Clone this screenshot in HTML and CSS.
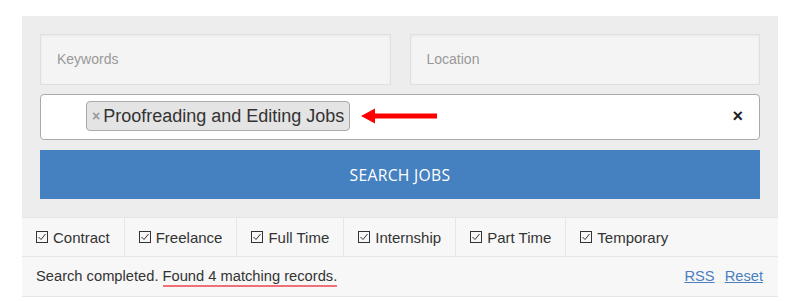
FILE: index.html
```html
<!DOCTYPE html>
<html>
<head>
<meta charset="utf-8">
<link rel="stylesheet" href="styles.css">
</head>
<body>
<div class="wrap">
  <div class="panel">
    <div class="inputs">
      <div class="field">Keywords</div>
      <div class="field">Location</div>
    </div>
    <div class="tagbox">
      <span class="tag"><span class="tag-x">×</span>Proofreading and Editing Jobs</span>
      <svg class="arrow" width="76" height="16" viewBox="0 0 76 16"><polygon points="0,8 14,0.5 14,5.5 76,5.5 76,10.5 14,10.5 14,15.5" fill="#f00"/></svg>
      <span class="clear">×</span>
    </div>
    <div class="button">SEARCH JOBS</div>
  </div>
  <div class="filters">
    <div class="cell"><svg class="cb" width="12" height="12" viewBox="0 0 12 12"><rect x="0.5" y="0.5" width="11" height="11" fill="none" stroke="#333"/><polyline points="2.5,6 5,8.5 9.5,3" fill="none" stroke="#333" stroke-width="1"/></svg>Contract</div>
    <div class="cell"><svg class="cb" width="12" height="12" viewBox="0 0 12 12"><rect x="0.5" y="0.5" width="11" height="11" fill="none" stroke="#333"/><polyline points="2.5,6 5,8.5 9.5,3" fill="none" stroke="#333" stroke-width="1"/></svg>Freelance</div>
    <div class="cell"><svg class="cb" width="12" height="12" viewBox="0 0 12 12"><rect x="0.5" y="0.5" width="11" height="11" fill="none" stroke="#333"/><polyline points="2.5,6 5,8.5 9.5,3" fill="none" stroke="#333" stroke-width="1"/></svg>Full Time</div>
    <div class="cell"><svg class="cb" width="12" height="12" viewBox="0 0 12 12"><rect x="0.5" y="0.5" width="11" height="11" fill="none" stroke="#333"/><polyline points="2.5,6 5,8.5 9.5,3" fill="none" stroke="#333" stroke-width="1"/></svg>Internship</div>
    <div class="cell"><svg class="cb" width="12" height="12" viewBox="0 0 12 12"><rect x="0.5" y="0.5" width="11" height="11" fill="none" stroke="#333"/><polyline points="2.5,6 5,8.5 9.5,3" fill="none" stroke="#333" stroke-width="1"/></svg>Part Time</div>
    <div class="cell last"><svg class="cb" width="12" height="12" viewBox="0 0 12 12"><rect x="0.5" y="0.5" width="11" height="11" fill="none" stroke="#333"/><polyline points="2.5,6 5,8.5 9.5,3" fill="none" stroke="#333" stroke-width="1"/></svg>Temporary</div>
  </div>
  <div class="results">
    <div class="msg">Search completed. <span class="found">Found 4 matching records.</span></div>
    <div class="links"><a href="#">RSS</a><a href="#">Reset</a></div>
  </div>
</div>
</body>
</html>
```
FILE: styles.css
```css
* { box-sizing: border-box; }
body {
  margin: 0;
  background: #fff;
  font-family: "Liberation Sans", Arial, sans-serif;
  color: #333;
}
.wrap {
  width: 756px;
  margin: 16px 0 0 22px;
}
.panel {
  background: #ededed;
  padding: 18px 18px 18px;
}
.inputs {
  display: flex;
  gap: 19px;
}
.field {
  flex: 1;
  height: 51px;
  background: #f4f4f4;
  border: 1px solid #e0e0e0;
  box-shadow: inset 0 1px 3px rgba(0,0,0,0.05);
  color: #999;
  font-size: 14px;
  display: flex;
  align-items: center;
  padding: 0 0 2px 16px;
}
.tagbox {
  margin-top: 9px;
  height: 46px;
  background: #fff;
  border: 1px solid #aaa;
  border-radius: 4px;
  display: flex;
  align-items: center;
  padding: 0 16px 2px 45px;
}
.tag {
  display: flex;
  align-items: center;
  height: 30px;
  background: #e4e4e4;
  border: 1px solid #aaa;
  border-radius: 4px;
  padding: 0 5px 0 5px;
  font-size: 18px;
  color: #333;
}
.tag-x {
  color: #999;
  font-weight: bold;
  font-size: 14px;
  margin-right: 3px;
}
.arrow {
  margin-left: 11px;
  display: block;
}
.clear {
  margin-left: auto;
  font-weight: bold;
  font-size: 18px;
  color: #222;
}
.button {
  margin-top: 10px;
  height: 49px;
  background: #4581c0;
  color: #fff;
  font-family: "Open Sans", sans-serif;
  font-size: 15.7px;
  letter-spacing: 0.3px;
  display: flex;
  align-items: center;
  justify-content: center;
}
.filters {
  display: flex;
  height: 40px;
  background: #f7f7f7;
  border-top: 1px solid #e6e6e6;
  border-bottom: 1px solid #e6e6e6;
}
.cell {
  display: flex;
  align-items: center;
  padding: 0 14px 0 14px;
  font-size: 15px;
  border-right: 1px solid #e6e6e6;
}
.cell.last { border-right: none; }
.cb {
  margin-right: 5px;
  display: block;
}
.results {
  height: 40px;
  background: #f7f7f7;
  border-bottom: 1px solid #e6e6e6;
  display: flex;
  align-items: center;
  justify-content: space-between;
  padding: 0 15px 1px 14px;
  font-size: 14.7px;
}
.found {
  border-bottom: 2px solid #f07078;
  padding-bottom: 1px;
}
.links a {
  color: #4a7fc1;
  margin-left: 10px;
}
```
